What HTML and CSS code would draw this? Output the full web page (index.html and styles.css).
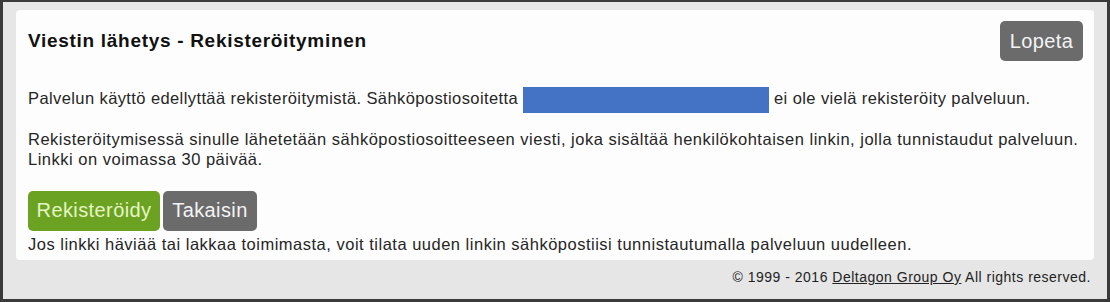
FILE: index.html
```html
<!DOCTYPE html>
<html lang="fi">
<head>
<meta charset="utf-8">
<title>Viestin lähetys - Rekisteröityminen</title>
<link rel="stylesheet" href="styles.css">
</head>
<body>
<div class="frame">
  <div class="panel">
    <div class="header">
      <h1 class="title">Viestin lähetys - Rekisteröityminen</h1>
      <button class="btn btn-gray btn-lopeta">Lopeta</button>
    </div>
    <p class="p1">Palvelun käyttö edellyttää rekisteröitymistä. Sähköpostiosoitetta <span class="redact"></span> ei ole vielä rekisteröity palveluun.</p>
    <p class="p2">Rekisteröitymisessä sinulle lähetetään sähköpostiosoitteeseen viesti, joka sisältää henkilökohtaisen linkin, jolla tunnistaudut palveluun.<br>Linkki on voimassa 30 päivää.</p>
    <div class="actions">
      <button class="btn btn-green">Rekisteröidy</button>
      <button class="btn btn-gray btn-takaisin">Takaisin</button>
    </div>
    <p class="p3">Jos linkki häviää tai lakkaa toimimasta, voit tilata uuden linkin sähköpostiisi tunnistautumalla palveluun uudelleen.</p>
  </div>
  <div class="footer">© 1999 - 2016 <a class="footer-link" href="#">Deltagon Group Oy</a> All rights reserved.</div>
</div>
</body>
</html>
```
FILE: styles.css
```css
html, body {
  margin: 0;
  padding: 0;
  background: #ffffff;
}
body {
  font-family: "Liberation Sans", Arial, sans-serif;
  color: #262626;
}
.frame {
  box-sizing: border-box;
  width: 1110px;
  height: 302px;
  border-style: solid;
  border-color: #3a3a3a;
  border-width: 2px 3px 3px 3px;
  background: #e6e6e6;
  padding: 8px 13px 0 13px;
}
.panel {
  box-sizing: border-box;
  height: 250px;
  background: #fdfdfd;
  border-radius: 4px;
  padding: 11px 11px 8px 12px;
}
.header {
  display: flex;
  justify-content: space-between;
  align-items: center;
  height: 40px;
}
.title {
  margin: 0;
  font-size: 19px;
  letter-spacing: 0.7px;
  font-weight: bold;
  color: #111;
}
.btn {
  font-family: "Liberation Sans", Arial, sans-serif;
  font-size: 20px;
  letter-spacing: 0.4px;
  height: 40px;
  border: none;
  border-radius: 5px;
  padding: 0;
  cursor: pointer;
}
.btn-gray {
  background: #6b6b6b;
  color: #f4f4f4;
}
.btn-lopeta {
  width: 83px;
}
.btn-takaisin {
  width: 94px;
}
.btn-green {
  background: #6ca222;
  color: #e4f6c4;
  width: 132px;
}
.p1, .p2, .p3 {
  margin: 0;
  font-size: 16.5px;
  letter-spacing: 0.5px;
  line-height: 20px;
}
.p1 {
  margin-top: 27px;
  letter-spacing: 0.4px;
}
.redact {
  display: inline-block;
  width: 246px;
  height: 26px;
  background: #4472c4;
  vertical-align: middle;
  margin: -3px 0;
}
.p2 {
  margin-top: 19px;
}
.actions {
  display: flex;
  gap: 3px;
  margin-top: 22px;
}
.p3 {
  margin-top: 3px;
}
.footer {
  text-align: right;
  font-size: 14px;
  letter-spacing: 0.5px;
  line-height: 18px;
  margin-top: 8px;
  padding-right: 3px;
  color: #222;
}
.footer-link {
  color: #222;
  text-decoration: underline;
}
```
